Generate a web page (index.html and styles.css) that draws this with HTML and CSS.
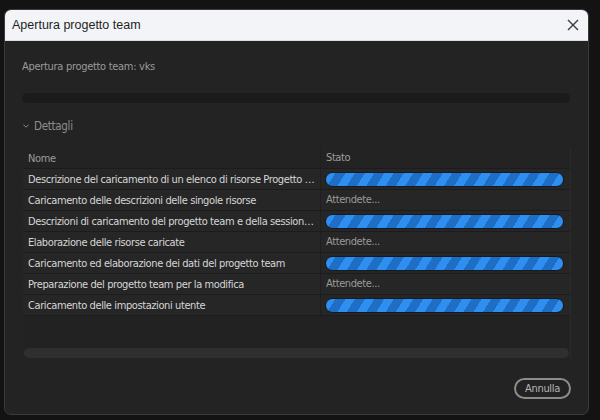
FILE: index.html
```html
<!DOCTYPE html>
<html lang="it">
<head>
<meta charset="utf-8">
<link rel="stylesheet" href="styles.css">
</head>
<body>
<div class="dialog">
  <div class="titlebar">
    <span class="title">Apertura progetto team</span>
    <svg class="close" width="12" height="12" viewBox="0 0 12 12"><path d="M1 1 L11 11 M11 1 L1 11" stroke="#3a3a3a" stroke-width="1.4" fill="none"/></svg>
  </div>
  <div class="content">
    <div class="subtitle">Apertura progetto team: vks</div>
    <div class="mainbar"></div>
    <div class="details">
      <svg class="chev" width="6" height="4" viewBox="0 0 6 4"><path d="M0.5 0.8 L3 3.2 L5.5 0.8" stroke="#8a8a8a" stroke-width="1" fill="none"/></svg>
      <span>Dettagli</span>
    </div>
    <div class="table">
      <div class="row head"><div class="c1">Nome</div><div class="c2">Stato</div></div>
      <div class="row"><div class="c1">Descrizione del caricamento di un elenco di risorse Progetto team</div><div class="c2"><div class="bar"></div></div></div>
      <div class="row"><div class="c1">Caricamento delle descrizioni delle singole risorse</div><div class="c2 wait">Attendete...</div></div>
      <div class="row"><div class="c1">Descrizioni di caricamento del progetto team e della sessione di lavoro</div><div class="c2"><div class="bar"></div></div></div>
      <div class="row"><div class="c1">Elaborazione delle risorse caricate</div><div class="c2 wait">Attendete...</div></div>
      <div class="row"><div class="c1">Caricamento ed elaborazione dei dati del progetto team</div><div class="c2"><div class="bar"></div></div></div>
      <div class="row"><div class="c1">Preparazione del progetto team per la modifica</div><div class="c2 wait">Attendete...</div></div>
      <div class="row"><div class="c1">Caricamento delle impostazioni utente</div><div class="c2"><div class="bar"></div></div></div>
      <div class="filler"></div>
      <div class="hscroll"></div>
    </div>
    <div class="footer"><button class="btn">Annulla</button></div>
  </div>
</div>
</body>
</html>
```
FILE: styles.css
```css
* { box-sizing: border-box; }
html, body { margin: 0; padding: 0; }
body {
  background: #131313;
  width: 600px;
  height: 420px;
  overflow: hidden;
  font-family: "DejaVu Sans Condensed", "DejaVu Sans", sans-serif;
  font-stretch: condensed;
}
.dialog {
  margin: 9px 0 0 4px;
  width: 585px;
  height: 406px;
  background: #232323;
  border: 1px solid #3b3b3b;
  border-radius: 7px;
  overflow: hidden;
  display: flex;
  flex-direction: column;
}
.titlebar {
  height: 31px;
  flex: none;
  background: #f2f4f7;
  display: flex;
  align-items: center;
  justify-content: space-between;
  padding: 0 9px 0 7px;
  border-bottom: 1px solid #d9dce0;
}
.title {
  font-family: "Liberation Sans", "Open Sans", sans-serif;
  font-stretch: normal;
  font-size: 12.5px;
  color: #1f1f1f;
}
.content {
  flex: 1;
  display: flex;
  flex-direction: column;
  padding: 0 17px 0 17px;
}
.subtitle {
  margin-top: 18px;
  line-height: 16px;
  font-size: 11px;
  letter-spacing: -0.3px;
  color: #9a9a9a;
}
.mainbar {
  margin-top: 18px;
  height: 10px;
  margin-right: 1px;
  border-radius: 5px;
  background: #1b1b1b;
}
.details {
  margin-top: 15px;
  height: 16px;
  display: flex;
  align-items: center;
  gap: 5px;
  font-size: 11.5px;
  letter-spacing: -0.3px;
  color: #8e8e8e;
}
.chev { margin-left: 1px; }
.table {
  margin-top: 14px;
  height: 210px;
  margin-left: 1px;
  display: flex;
  flex-direction: column;
  background: #222222;
  border-right: 1px solid #2b2b2b;
}
.row {
  height: 21px;
  flex: none;
  display: flex;
  border-bottom: 1px solid #1c1c1c;
  background: #262626;
  font-size: 11px;
  letter-spacing: -0.4px;
  color: #d6d6d6;
}
.row.head {
  background: #232323;
  color: #9d9d9d;
}
.c1 {
  width: 297px;
  flex: none;
  padding-left: 5px;
  line-height: 21px;
  white-space: nowrap;
  overflow: hidden;
  text-overflow: ellipsis;
  padding-right: 4px;
}
.c2 {
  flex: 1;
  padding: 3px 6px 0 4px;
  line-height: 16px;
  border-left: 1px solid #1f1f1f;
}
.row.head .c2, .c2.wait { padding-top: 2px; padding-left: 5px; }
.c2.wait { color: #9a9a9a; }
.bar {
  height: 15px;
  border-radius: 8px;
  border: 1px solid #141a22;
  background: repeating-linear-gradient(122deg, #2f8ff0 0 8px, #1f6ec6 8px 16.5px);
}
.filler { flex: 1; }
.hscroll {
  height: 10px;
  margin: 2px 1px 0 1px;
  border-radius: 5px;
  background: #2f2f2f;
}
.footer {
  display: flex;
  justify-content: flex-end;
  margin-top: 20px;
}
.btn {
  width: 57px;
  height: 21px;
  border: 2px solid #8c8c8c;
  border-radius: 11px;
  background: transparent;
  color: #b5b5b5;
  font-family: inherit;
  font-stretch: condensed;
  font-size: 11px;
  letter-spacing: -0.3px;
  padding: 0;
  line-height: 16px;
}
```
